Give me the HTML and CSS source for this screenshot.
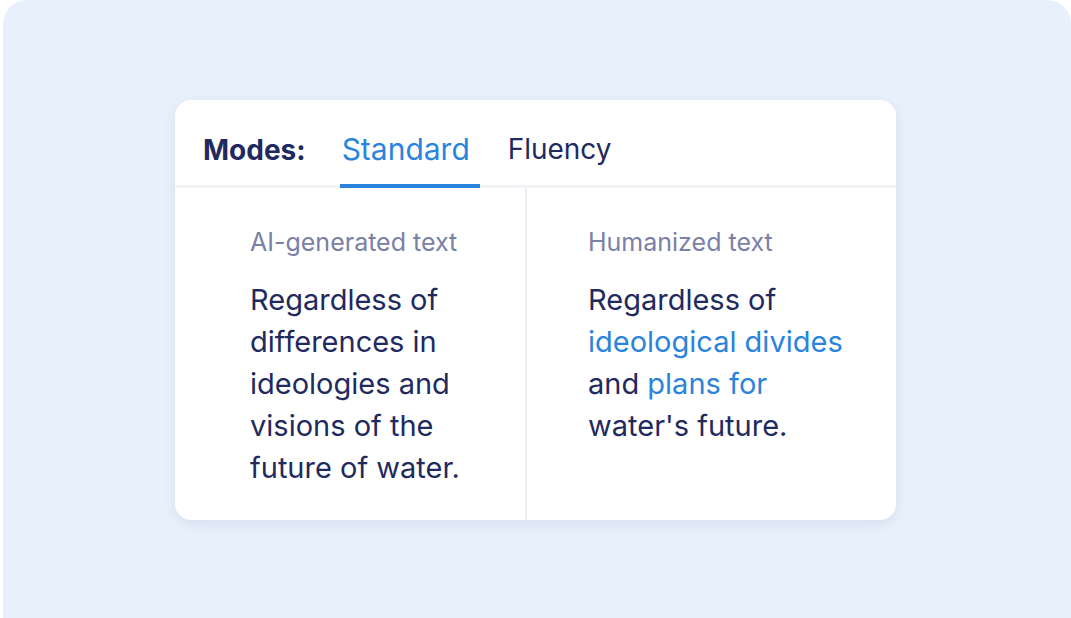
FILE: index.html
```html
<!DOCTYPE html>
<html>
<head>
<meta charset="utf-8">
<link rel="stylesheet" href="styles.css">
</head>
<body>
<div class="panel">
  <div class="card">
    <div class="tabs">
      <span class="modes">Modes:</span>
      <span class="tab active">Standard</span>
      <span class="tab">Fluency</span>
    </div>
    <div class="cols">
      <div class="col left">
        <div class="label">AI-generated text</div>
        <p class="text">Regardless of<br>differences in<br>ideologies and<br>visions of the<br>future of water.</p>
      </div>
      <div class="col right">
        <div class="label">Humanized text</div>
        <p class="text">Regardless of<br><span class="hl">ideological divides</span><br>and <span class="hl">plans for</span><br>water's future.</p>
      </div>
    </div>
  </div>
</div>
</body>
</html>
```

FILE: styles.css
```css
html, body {
  margin: 0;
  padding: 0;
  background: #ffffff;
  overflow: hidden;
}
body {
  padding-left: 3px;
  font-family: Inter, "Noto Sans", sans-serif;
}
.panel {
  height: 618px;
  background: #e8f1fb;
  border-radius: 24px 24px 0 0;
  padding: 100px 0 0 172px;
  box-sizing: border-box;
}
.card {
  width: 721px;
  height: 420px;
  background: #ffffff;
  border-radius: 16px;
  box-shadow: 0 4px 14px rgba(60, 90, 140, 0.10);
  display: flex;
  flex-direction: column;
  overflow: hidden;
}
.tabs {
  height: 85px;
  display: flex;
  align-items: stretch;
  padding-left: 28px;
  border-bottom: 3px solid #f1f3f6;
  box-sizing: content-box;
}
.modes, .tab {
  display: flex;
  align-items: center;
  padding-top: 14px;
  box-sizing: border-box;
}
.modes {
  font-size: 28px;
  font-weight: 700;
  color: #1f2a5e;
  margin-right: 34px;
}
.tab {
  font-size: 28px;
  color: #1f2a5e;
  font-weight: 400;
  border-bottom: 4px solid transparent;
  margin-bottom: -3px;
}
.tab.active {
  font-size: 30px;
  color: #2a83dc;
  border-bottom-color: #2a83dc;
  width: 140px;
  padding-left: 2px;
  margin-right: 28px;
}
.cols {
  flex: 1;
  display: flex;
}
.col {
  box-sizing: border-box;
  padding-top: 40px;
}
.left {
  width: 352px;
  padding-left: 75px;
  border-right: 2px solid #eceef2;
}
.right {
  flex: 1;
  padding-left: 61px;
}
.label {
  font-size: 25px;
  color: #7b80a6;
  line-height: 28px;
}
.text {
  margin: 23px 0 0;
  font-size: 29px;
  line-height: 42px;
  color: #1f2a5e;
}
.hl {
  color: #2a83dc;
}
```
